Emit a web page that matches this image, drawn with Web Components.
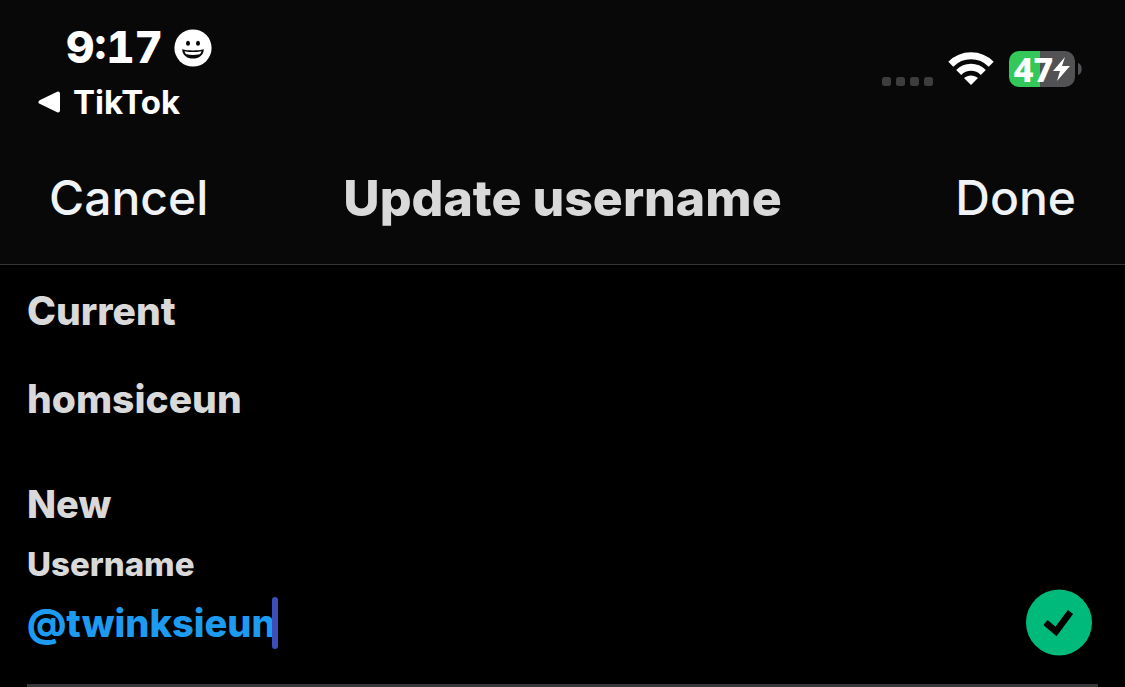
<!DOCTYPE html>
<html lang="en">
<head>
<meta charset="utf-8">
<meta name="viewport" content="width=device-width, initial-scale=1">
<title>Update username</title>
<style>
  html { background: #000; }
  body { margin: 0; color: #d9d9d9; font-family: Inter, "Liberation Sans", sans-serif; }
</style>
</head>
<body>
<username-screen></username-screen>
<script>
const define = (name, html) => {
  const template = document.createElement('template');
  template.innerHTML = html;
  customElements.define(name, class extends HTMLElement {
    constructor() {
      super();
      this.attachShadow({ mode: 'open' }).append(template.content.cloneNode(true));
    }
  });
};

define('battery-level', `
  <style>
    :host { display: flex; align-items: center; gap: 3px; }
    .cell { display: flex; align-items: center; justify-content: center; width: 66px; height: 36px; border-radius: 10px;
      background: linear-gradient(90deg, #34c759 47%, #525254 47%); color: #fff; font: 800 34px/36px "Noto Sans", sans-serif; }
    svg { display: block; }
  </style>
  <div class="cell"><span>47</span><svg width="17" height="26" viewBox="0 0 17 26" aria-hidden="true"><path fill="#fff" d="M12 1 0 15h7L4 25 17 10h-8l3-9z"/></svg></div>
  <svg width="4" height="14" viewBox="0 0 4 14" aria-hidden="true"><path fill="#525254" d="M0 1C5 2 5 12 0 13z"/></svg>
`);

define('status-bar', `
  <style>
    :host { display: flex; justify-content: space-between; align-items: flex-start; padding: 24px 43px 0 38px; color: #fff; }
    .time { display: flex; align-items: center; gap: 11px; padding-left: 28px; font-size: 44px; line-height: 47px; font-weight: 800; font-variant-numeric: tabular-nums; }
    .back { display: flex; align-items: center; gap: 12px; margin-top: 11px; color: inherit; text-decoration: none; font-size: 33px; line-height: 40px; font-weight: 700; }
    .right { display: flex; align-items: center; gap: 15px; margin-top: 27px; }
    .dots { padding-top: 24px; }
    svg { display: block; }
  </style>
  <div>
    <div class="time"><span>9:17</span>
      <svg width="38" height="38" viewBox="0 0 38 38" role="img" aria-label="Smiling face">
        <circle cx="19" cy="19" r="18.6" fill="#fff"/>
        <ellipse cx="14" cy="14.3" rx="2" ry="2.5" fill="#080808"/><ellipse cx="24" cy="14.3" rx="2" ry="2.5" fill="#080808"/>
        <path d="M8.2 20.200C14 21.800 24 21.800 29.800 20.200 29.800 26 25 29.500 19 29.500S8.200 26 8.200 20.200z" fill="#080808"/>
        <path d="M10.600 22.200C16 23.400 22 23.400 27.400 22.200 27 24 26.300 25 25.500 25.300 21 26.300 17 26.300 12.500 25.300 11.700 25 11 24 10.600 22.200z" fill="#fff"/>
      </svg>
    </div>
    <a class="back" href="#tiktok">
      <svg width="23" height="22" viewBox="0 0 23 22" aria-hidden="true"><path d="M2.500 11 20 2.500v17z" fill="#fff" stroke="#fff" stroke-width="4" stroke-linejoin="round"/></svg>
      <span>TikTok</span>
    </a>
  </div>
  <div class="right">
    <div class="dots"><svg width="51" height="9" viewBox="0 0 51 9" aria-hidden="true"><g fill="#3d3d3d"><rect width="9" height="9" rx="2.500"/><rect x="14" width="9" height="9" rx="2.500"/><rect x="28" width="9" height="9" rx="2.500"/><rect x="42" width="9" height="9" rx="2.500"/></g></svg></div>
    <svg width="46" height="34" viewBox="0 0 46 34" role="img" aria-label="Wi-Fi">
      <g fill="none" stroke="#fff" stroke-width="7"><path d="M2.800 12.300C14 1 32 1 43.200 12.300"/><path d="M10.700 20.500C17.500 13.500 28.500 13.500 35.300 20.500"/></g>
      <path d="M16 26C20 22.500 26 22.500 30 26L23 33z" fill="#fff"/>
    </svg>
    <battery-level></battery-level>
  </div>
`);

define('nav-bar', `
  <style>
    :host { display: grid; grid-template-columns: 1fr auto 1fr; align-items: center; padding: 42px 49px 32px; border-bottom: 1px solid #373737; }
    ::slotted(button) { justify-self: start; border: 0; padding: 0; background: none; color: #f0f3f5; font: 500 48px/68px Inter, sans-serif; }
    ::slotted([slot=end]) { justify-self: end; }
    h1 { margin: 0; font: 800 50px/68px Inter, sans-serif; }
  </style>
  <slot name="start"></slot><h1><slot></slot></h1><slot name="end"></slot>
`);

define('current-name', `
  <style>
    :host { display: block; font: 800 39px/52px Inter, sans-serif; }
    h2, p { margin: 0; font: inherit; }
    p { margin-top: 36px; }
  </style>
  <h2>Current</h2><p><slot></slot></p>
`);

define('username-field', `
  <style>
    :host { display: block; margin-top: 53px; font: 800 38px/52px Inter, sans-serif; }
    h2 { margin: 0; font: inherit; }
    label { display: block; margin-top: 12px; font-size: 33px; line-height: 44px; }
    .row { display: flex; align-items: center; justify-content: space-between; padding: 3px 6px 28px 0; border-bottom: 3px solid #38383a; }
    .entry { display: flex; align-items: center; }
    input { field-sizing: content; border: 0; padding: 0; margin: 0; background: none; outline: 0; color: #1d9bf0; font: inherit; }
    .caret { width: 6px; height: 52px; border-radius: 3px; background: #3b4fb8; margin-left: -4px; }
    svg { display: block; }
  </style>
  <h2>New</h2>
  <label for="name">Username</label>
  <div class="row">
    <div class="entry"><input id="name" value="@twinksieun" spellcheck="false" autocomplete="off"><span class="caret"></span></div>
    <svg width="66" height="67" viewBox="0 0 66 67" role="img" aria-label="Available"><circle cx="33" cy="33.500" r="33" fill="#00ba7c"/><path d="m19.500 33.500 10.500 9L44.500 23" fill="none" stroke="#000" stroke-width="6.500"/></svg>
  </div>
`);

define('username-screen', `
  <style>
    :host { display: block; }
    header { background: #080808; }
    main { padding: 20px 27px 0; }
  </style>
  <header>
    <status-bar></status-bar>
    <nav-bar><button slot="start" type="button">Cancel</button>Update username<button slot="end" type="button">Done</button></nav-bar>
  </header>
  <main>
    <current-name>homsiceun</current-name>
    <username-field></username-field>
  </main>
`);
</script>
</body>
</html>
